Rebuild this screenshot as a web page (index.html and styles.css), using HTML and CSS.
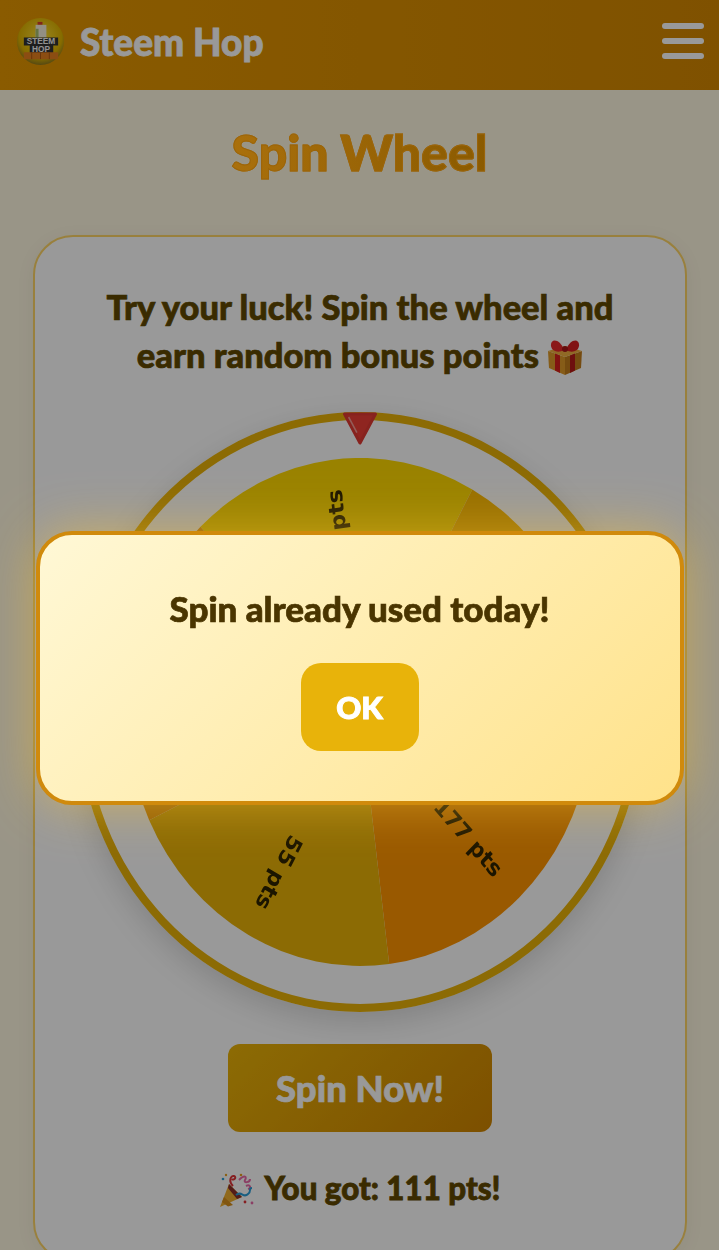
FILE: index.html
```html
<!DOCTYPE html>
<html lang="en">
<head>
    <meta charset="UTF-8">
    <meta name="viewport" content="width=device-width, initial-scale=1.0">
    <title>Spin Wheel - Steem Hop</title>
    <link rel="stylesheet" href="styles.css">
</head>
<body>
    <header class="topbar">
        <div class="brand">
            <svg class="logo" viewBox="0 0 48 48">
                <defs>
                    <radialGradient id="logoBg" cx="50%" cy="40%" r="60%">
                        <stop offset="0" stop-color="#ffe23a"/>
                        <stop offset="0.75" stop-color="#e0b400"/>
                        <stop offset="1" stop-color="#8f7a20"/>
                    </radialGradient>
                </defs>
                <circle cx="24" cy="24" r="24" fill="url(#logoBg)"/>
                <rect x="21" y="4" width="5" height="3" fill="#d8402a"/>
                <rect x="19" y="7" width="11" height="13" fill="#f5eedc"/>
                <rect x="19" y="11" width="3" height="9" fill="#a8c070"/>
                <path d="M7 20 H42 V28 H37 V36 H13 V28 H7 Z" fill="#333"/>
                <rect x="7" y="35" width="35" height="7" rx="1" fill="#e8801e"/>
                <path d="M15 35 V42 M24 35 V42 M33 35 V42" stroke="#b05a10" stroke-width="1"/>
                <text class="logo-text" x="24.5" y="27">STEEM</text>
                <text class="logo-text" x="24.5" y="35">HOP</text>
            </svg>
            <span class="brand-name">Steem Hop</span>
        </div>
        <button class="burger" aria-label="Menu">
            <span></span>
            <span></span>
            <span></span>
        </button>
    </header>

    <main class="page">
        <h1 class="page-title">Spin Wheel</h1>
        <section class="card">
            <p class="intro">Try your luck! Spin the wheel and<br>earn random bonus points
                <svg class="emoji" viewBox="0 0 36 36">
                    <path d="M1 12 L18 18 L18 36 L2 29 Z" fill="#e09a28"/>
                    <path d="M35 12 L18 18 L18 36 L34 29 Z" fill="#c47e1c"/>
                    <path d="M1 12 L18 7 L35 12 L18 18 Z" fill="#f0b040"/>
                    <path d="M8 14.5 L13 16.5 L13 34 L8 31.5 Z" fill="#d8201c"/>
                    <path d="M28 14.5 L23 16.5 L23 34 L28 31.5 Z" fill="#b81a18"/>
                    <path d="M17 11 C13 -1 3 -1 4 7 C5 13 12 14 17 11 Z" fill="#e8282a"/>
                    <path d="M19 11 C23 -1 33 -1 32 7 C31 13 24 14 19 11 Z" fill="#d81f22"/>
                    <circle cx="18" cy="10" r="3" fill="#a81618"/>
                </svg>
            </p>

            <div class="wheel-ring">
                <svg class="pointer" viewBox="0 0 36 32">
                    <path d="M3 2 L33 2 L18 30 Z" fill="#ee3f36" stroke="#e23a32" stroke-width="3" stroke-linejoin="round"/>
                    <path d="M7 5 L15 20" stroke="#f59a94" stroke-width="1.5"/>
                </svg>
                <svg class="wheel" viewBox="0 0 508 508" preserveAspectRatio="none">
                    <path d="M254 254 L80.1 68.8 A254 254 0 0 1 376.4 31.4 Z" fill="#ffd900"/>
                    <path d="M254 254 L376.4 31.4 A254 254 0 0 1 503.5 301.6 Z" fill="#fbb900"/>
                    <path d="M254 254 L503.5 301.6 A254 254 0 0 1 285.8 506 Z" fill="#ff9500"/>
                    <path d="M254 254 L285.8 506 A254 254 0 0 1 24.2 362.2 Z" fill="#eab308"/>
                    <path d="M254 254 L24.2 362.2 A254 254 0 0 1 80.1 68.8 Z" fill="#f59e0b"/>
                    <text class="wheel-label" x="478" y="262" transform="rotate(-97.2 254 254)">25 pts</text>
                    <text class="wheel-label" x="478" y="262" transform="rotate(-25.2 254 254)">111 pts</text>
                    <text class="wheel-label" x="475" y="262" transform="rotate(46.8 254 254)">177 pts</text>
                    <text class="wheel-label" x="478" y="262" transform="rotate(118.8 254 254)">55 pts</text>
                    <text class="wheel-label" x="478" y="262" transform="rotate(190.8 254 254)">88 pts</text>
                </svg>
            </div>

            <button class="spin-btn">Spin Now!</button>

            <p class="result">
                <svg class="emoji emoji-lead" viewBox="0 0 36 36">
                    <path d="M1 36 L10 13 L23 26 Z" fill="#f0b030"/>
                    <path d="M5 26 L14 34 L9 35.5 L3 31 Z" fill="#d88f1c"/>
                    <path d="M10 13 L23 26 L18 28 L9 17 Z" fill="#8a2f2a"/>
                    <path d="M14 15 C9 10 12 4 15 5 C18 6 15 10 13 8" fill="none" stroke="#e0353a" stroke-width="2"/>
                    <path d="M20 9 C26 3 28 6 26 9 C24 12 31 12 31 8 M27 15 C31 13 33 17 29 18" fill="none" stroke="#e86aa8" stroke-width="2"/>
                    <path d="M17 24 C23 19 24 28 29 23 C33 20 29 17 33 17" fill="none" stroke="#2a9fd8" stroke-width="2"/>
                    <circle cx="4" cy="8" r="1.3" fill="#2a9fd8"/>
                    <circle cx="7" cy="4" r="1.2" fill="#e8a020"/>
                    <circle cx="22" cy="4" r="1.3" fill="#e8a020"/>
                    <circle cx="26" cy="31" r="1.4" fill="#e0353a"/>
                    <circle cx="33" cy="32" r="1.4" fill="#e86aa8"/>
                </svg>
                You got: 111 pts!
            </p>
        </section>
    </main>

    <div class="overlay">
        <div class="modal">
            <p class="modal-text">Spin already used today!</p>
            <button class="modal-btn">OK</button>
        </div>
    </div>
</body>
</html>
```

FILE: styles.css
```css
html {
    overflow: hidden;
}
body {
    font-family: Lato, "Open Sans", sans-serif;
    background-color: #fff8e1;
    margin: 0;
}
button {
    font-family: inherit;
    border: none;
    cursor: pointer;
}
.topbar {
    height: 90px;
    box-sizing: border-box;
    padding: 0 15px 8px 17px;
    display: flex;
    justify-content: space-between;
    align-items: center;
    background: linear-gradient(90deg, #e69800, #d48800);
}
.brand {
    display: flex;
    align-items: center;
    gap: 16px;
}
.logo {
    width: 47px;
    height: 47px;
}
.logo-text {
    font-family: "Liberation Sans", sans-serif;
    font-size: 8.5px;
    font-weight: 700;
    fill: #f4f4f4;
    text-anchor: middle;
}
.brand-name {
    font-size: 37px;
    font-weight: 900;
    color: #fff;
    -webkit-text-stroke: 0.8px #fff;
}
.burger {
    width: 42px;
    padding: 0;
    display: flex;
    flex-direction: column;
    gap: 9px;
    background: transparent;
}
.burger span {
    height: 6px;
    border-radius: 3px;
    background-color: #fff;
}
.page {
    padding-top: 30px;
}
.page-title {
    position: relative;
    z-index: 20;
    margin: 0 0 51px;
    font-size: 50px;
    line-height: 64px;
    font-weight: 900;
    text-align: center;
    color: transparent;
    background: linear-gradient(90deg, #aa700c 32%, #8a5a00 68%);
    -webkit-background-clip: text;
    background-clip: text;
    -webkit-text-stroke: 1px #9c650a;
}
.card {
    margin: 0 32px 0 33px;
    padding: 46px 0 48px;
    display: flex;
    flex-direction: column;
    align-items: center;
    background-color: #fff;
    border: 2px solid #ffd666;
    border-radius: 40px;
    box-shadow: 0 4px 20px rgba(0, 0, 0, 0.05);
}
.intro {
    margin: 0 0 33px;
    font-size: 34.5px;
    line-height: 48px;
    font-weight: 900;
    text-align: center;
    color: #614900;
    -webkit-text-stroke: 0.7px #614900;
}
.emoji {
    width: 36px;
    height: 36px;
    vertical-align: -7px;
}
.emoji-lead {
    margin-right: 3px;
}
.wheel-ring {
    position: relative;
    width: 566px;
    height: 600px;
    box-sizing: border-box;
    margin-bottom: 32px;
    display: flex;
    justify-content: center;
    align-items: center;
    border: 8px solid #eab308;
    border-radius: 50%;
    box-shadow: 0 10px 30px rgba(0, 0, 0, 0.15);
}
.wheel {
    width: 466px;
    height: 508px;
    filter: blur(0.5px);
}
.wheel-label {
    font-family: "DejaVu Sans", sans-serif;
    font-size: 23px;
    font-weight: 700;
    fill: #2e2300;
    text-anchor: end;
}
.pointer {
    position: absolute;
    top: -8px;
    left: 50%;
    width: 38px;
    height: 33px;
    margin-left: -19px;
}
.spin-btn {
    width: 264px;
    height: 88px;
    margin-bottom: 32px;
    font-size: 36.5px;
    font-weight: 900;
    color: #fff;
    -webkit-text-stroke: 0.7px #fff;
    background: linear-gradient(135deg, #eab308, #d08500);
    border-radius: 12px;
}
.result {
    margin: 0;
    font-size: 31.3px;
    line-height: 48px;
    font-weight: 900;
    color: #614900;
    -webkit-text-stroke: 0.8px #614900;
}
.overlay {
    position: fixed;
    top: 0;
    left: 0;
    right: 0;
    bottom: 0;
    z-index: 10;
    display: flex;
    justify-content: center;
    align-items: flex-start;
    padding-top: 531px;
    background-color: rgba(0, 0, 0, 0.4);
}
.modal {
    width: 648px;
    height: 274px;
    box-sizing: border-box;
    padding-top: 52px;
    text-align: center;
    background: linear-gradient(135deg, #fff8d6, #ffe28a);
    border: 4px solid #d08a0c;
    border-radius: 36px;
    box-shadow: 0 0 50px rgba(255, 200, 50, 0.5);
}
.modal-text {
    margin: 0 0 34px;
    font-size: 35px;
    line-height: 42px;
    font-weight: 900;
    color: #4a3500;
    -webkit-text-stroke: 0.7px #4a3500;
}
.modal-btn {
    width: 118px;
    height: 88px;
    font-size: 31px;
    font-weight: 900;
    color: #fff;
    -webkit-text-stroke: 1px #fff;
    background-color: #e8b30a;
    border-radius: 20px;
}
```
